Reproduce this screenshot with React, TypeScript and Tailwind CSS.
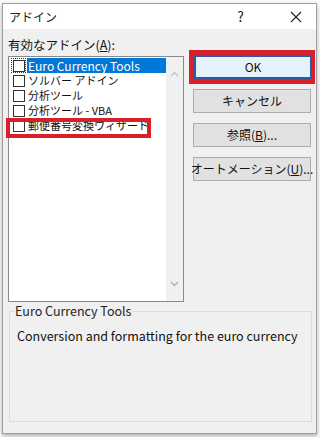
import React from "react";

const font = { fontFamily: '"Noto Sans CJK JP", "Noto Sans", sans-serif' };

const items = [
  { t: "Euro Currency Tools", jp: false },
  { t: "ソルバー アドイン", jp: true },
  { t: "分析ツール", jp: true },
  { t: "分析ツール - VBA", jp: true },
  { t: "郵便番号変換ウィザード", jp: true },
];

const Btn = ({ children, primary }: { children: React.ReactNode; primary?: boolean }) => (
  <div
    className={`flex h-[24px] w-[118px] items-center justify-center whitespace-nowrap text-[12px] leading-none text-[#111] ${
      primary ? "border-2 border-[#2a5aa8] bg-[#e5f1fb]" : "border border-[#adadad] bg-[#e1e1e1]"
    }`}
  >
    {children}
  </div>
);

export default function App() {
  return (
    <div className="h-[437px] w-[320px] overflow-hidden bg-[#fafafa]" style={font}>
      <div className="ml-[2px] mt-[3px] flex h-[431px] w-[315px] flex-col border border-[#a0a0a0] bg-[#f0f0f0] shadow-[0_2px_4px_rgba(0,0,0,0.3)]">
        {/* title bar */}
        <div className="flex h-[25px] items-center bg-white pl-[6px] text-[12px] text-[#222]">
          <span>アドイン</span>
          <span className="ml-auto mr-[46px] text-[14px]">?</span>
          <svg width="12" height="12" viewBox="0 0 12 12" className="mr-[14px]">
            <path d="M1 1 L11 11 M11 1 L1 11" stroke="#222" strokeWidth="1.1" />
          </svg>
        </div>

        <div className="flex px-[5px] pt-[7px]">
          {/* left column */}
          <div className="flex w-[176px] flex-col">
            <div className="h-[20px] whitespace-nowrap text-[12.5px] leading-[18px] text-[#111]">
              有効なアドイン(<span className="underline">A</span>):
            </div>
            <div className="relative flex h-[246px] border border-[#8a8a8a] bg-white">
              <div className="flex flex-1 flex-col pl-[2px] pt-[1px]">
                {items.map((it, i) => (
                  <div key={it.t} className="flex h-[15px] items-center">
                    <div
                      className={`flex h-[15px] w-[15px] shrink-0 items-center justify-center ${
                        i === 0 ? "outline outline-1 -outline-offset-1 outline-dotted outline-[#333]" : ""
                      }`}
                    >
                      <div className="h-[12px] w-[12px] border border-[#333] bg-white" />
                    </div>
                    <div
                      className={`ml-[1px] flex h-[15px] items-center whitespace-nowrap pl-[1px] pr-[2px] leading-none ${
                        it.jp ? "text-[11px]" : "text-[12px]"
                      } ${i === 0 ? "w-[139px] bg-[#0078d7] text-white" : "text-[#111]"}`}
                    >
                      {it.t}
                    </div>
                  </div>
                ))}
              </div>
              <div className="flex w-[17px] flex-col items-center justify-between bg-[#f0f0f0] py-[14px]">
                <svg width="9" height="6" viewBox="0 0 9 6">
                  <path d="M1 5 L4.5 1.5 L8 5" stroke="#c2c2c2" strokeWidth="1.3" fill="none" />
                </svg>
                <svg width="9" height="6" viewBox="0 0 9 6">
                  <path d="M1 1 L4.5 4.5 L8 1" stroke="#b0b0b0" strokeWidth="1.3" fill="none" />
                </svg>
              </div>
              <div className="absolute left-[-3px] top-[61px] h-[20px] w-[145px] border-[4px] border-[#d7202a]" />
            </div>
          </div>

          {/* right column */}
          <div className="ml-[9px] mt-[19px] flex flex-col gap-[10px]">
            <div className="-ml-[4px] -mt-[5px] mb-[-5px] w-[126px] border-[5px] border-[#d7202a] bg-[#d7202a]">
              <Btn primary>OK</Btn>
            </div>
            <Btn>キャンセル</Btn>
            <Btn>
              参照(<span className="underline">B</span>)...
            </Btn>
            <Btn>
              オートメーション(<span className="underline">U</span>)...
            </Btn>
          </div>
        </div>

        {/* group box */}
        <div className="relative ml-[6px] mt-[9px] h-[111px] w-[303px] border border-[#dcdcdc]">
          <div className="absolute left-[4px] top-[-9px] whitespace-nowrap bg-[#f0f0f0] px-px text-[12.5px] leading-[16px] text-[#222]">
            Euro Currency Tools
          </div>
          <div className="whitespace-nowrap pl-[7px] pt-[16px] text-[12.5px] leading-[16px] text-[#111]">
            Conversion and formatting for the euro currency
          </div>
        </div>
      </div>
    </div>
  );
}
